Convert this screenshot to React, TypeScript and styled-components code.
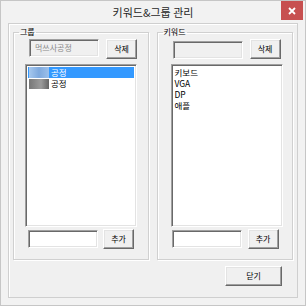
import React from "react";
import styled, { createGlobalStyle } from "styled-components";

const Global = createGlobalStyle`
  html, body { margin: 0; padding: 0; background: #ffffff; }
  * { box-sizing: border-box; }
`;

const FONT = `"Noto Sans CJK KR", "Noto Sans", sans-serif`;

const Window = styled.div`
  width: 306px;
  height: 306px;
  background: #f2f2f2;
  border: 1px solid #c6c6c6;
  display: flex;
  flex-direction: column;
  font-family: ${FONT};
  color: #000;
  overflow: hidden;
`;

const TitleBar = styled.div`
  height: 21px;
  display: flex;
  align-items: center;
  justify-content: center;
  position: relative;
  flex: none;
`;

const Title = styled.div`
  font-size: 11px;
  line-height: 13px;
  color: #1f1f1f;
  margin-top: 2px;
`;

const CloseBtn = styled.div`
  position: absolute;
  right: 2px;
  top: 0;
  width: 22px;
  height: 19px;
  background: #c75050;
  display: flex;
  align-items: center;
  justify-content: center;
`;

const Client = styled.div`
  flex: 1;
  margin: 1px 7px 7px 7px;
  background: #f0f0f0;
  border: 1px solid #cfcfcf;
  box-shadow: inset 1px 1px 0 #ffffff;
  padding: 3px 4px 0 4px;
  display: flex;
  flex-direction: column;
`;

const Groups = styled.div`
  display: flex;
  gap: 8px;
`;

const Group = styled.fieldset<{ $w: number }>`
  width: ${(p) => p.$w}px;
  height: 233px;
  margin: 0;
  padding: 0;
  border: 1px solid #d0d0d0;
  box-shadow: inset 1px 1px 0 #ffffff, 1px 1px 0 #ffffff;
  display: flex;
  flex-direction: column;
  min-width: 0;
`;

const Legend = styled.legend`
  font-size: 8px;
  line-height: 10px;
  padding: 0 1px;
  margin-left: 5px;
  color: #000;
`;

const Row = styled.div<{ $top: number; $gap: number; $left: number }>`
  display: flex;
  align-items: flex-start;
  margin-top: ${(p) => p.$top}px;
  margin-left: ${(p) => p.$left}px;
  gap: ${(p) => p.$gap}px;
`;

const TextBox = styled.div<{ $disabled?: boolean; $dy?: number }>`
  width: 70px;
  height: 18px;
  margin-top: ${(p) => p.$dy || 0}px;
  background: ${(p) => (p.$disabled ? "#f0f0f0" : "#ffffff")};
  border-top: 1px solid #a0a0a0;
  border-left: 1px solid #a0a0a0;
  border-right: 1px solid #ffffff;
  border-bottom: 1px solid #ffffff;
  box-shadow: inset 1px 1px 0 #696969, inset -1px -1px 0 #e3e3e3;
  font-size: 8px;
  line-height: 14px;
  padding: 1px 0 0 5px;
  color: #8a8a8a;
  white-space: nowrap;
  overflow: hidden;
`;

const Button = styled.div<{ $w: number }>`
  width: ${(p) => p.$w}px;
  height: 20px;
  background: #f0f0f0;
  border-top: 1px solid #ffffff;
  border-left: 1px solid #ffffff;
  border-right: 1px solid #696969;
  border-bottom: 1px solid #696969;
  box-shadow: inset -1px -1px 0 #a0a0a0, inset 1px 1px 0 #e3e3e3;
  font-size: 8px;
  line-height: 17px;
  text-align: center;
  color: #000;
`;

const ListBox = styled.div<{ $left: number }>`
  width: 112px;
  height: 163px;
  margin-top: 5px;
  margin-left: ${(p) => p.$left}px;
  background: #ffffff;
  border-top: 1px solid #a0a0a0;
  border-left: 1px solid #a0a0a0;
  border-right: 1px solid #ffffff;
  border-bottom: 1px solid #ffffff;
  box-shadow: inset 1px 1px 0 #696969, inset -1px -1px 0 #e3e3e3;
  padding: 2px 2px;
  display: flex;
  flex-direction: column;
`;

const Item = styled.div<{ $sel?: boolean }>`
  height: 11px;
  font-size: 8.5px;
  line-height: 11px;
  padding-left: 1px;
  white-space: nowrap;
  background: ${(p) => (p.$sel ? "#3399ff" : "transparent")};
  color: ${(p) => (p.$sel ? "#ffffff" : "#000000")};
  display: flex;
  align-items: center;
`;

const Blur = styled.span<{ $w: number; $sel?: boolean }>`
  display: inline-block;
  width: ${(p) => p.$w}px;
  height: ${(p) => (p.$sel ? 11 : 10)}px;
  background: ${(p) =>
    p.$sel
      ? "linear-gradient(90deg, #a6c8ee 0%, #7ea9de 50%, #9cc0ea 100%)"
      : "linear-gradient(90deg, #5f5f5f 0%, #8a8a8a 60%, #4a4a4a 100%)"};
  margin-right: 2px;
  opacity: ${(p) => (p.$sel ? 1 : 0.85)};
`;

const Footer = styled.div`
  display: flex;
  justify-content: flex-end;
  padding-right: 11px;
  margin-top: 6px;
`;

export default function App() {
  return (
    <>
      <Global />
      <Window>
        <TitleBar>
          <Title>키워드&amp;그룹 관리</Title>
          <CloseBtn>
            <svg width="8" height="8" viewBox="0 0 8 8">
              <path d="M1 1 L7 7 M7 1 L1 7" stroke="#fff" strokeWidth="1.8" />
            </svg>
          </CloseBtn>
        </TitleBar>
        <Client>
          <Groups>
            <Group $w={136}>
              <Legend>그룹</Legend>
              <Row $top={2} $gap={7} $left={15}>
                <TextBox $disabled $dy={0}>먹쓰사공정</TextBox>
                <Button $w={31}>삭제</Button>
              </Row>
              <ListBox $left={11}>
                <Item $sel>
                  <Blur $w={20} $sel />공정
                </Item>
                <Item>
                  <Blur $w={20} />공정
                </Item>
              </ListBox>
              <Row $top={2} $gap={5} $left={14}>
                <TextBox $dy={1} />
                <Button $w={31}>추가</Button>
              </Row>
            </Group>
            <Group $w={137}>
              <Legend>키워드</Legend>
              <Row $top={2} $gap={7} $left={15}>
                <TextBox $disabled $dy={2} />
                <Button $w={31}>삭제</Button>
              </Row>
              <ListBox $left={13}>
                <Item>키보드</Item>
                <Item>VGA</Item>
                <Item>DP</Item>
                <Item>애플</Item>
              </ListBox>
              <Row $top={2} $gap={6} $left={14}>
                <TextBox $dy={1} />
                <Button $w={31}>추가</Button>
              </Row>
            </Group>
          </Groups>
          <Footer>
            <Button $w={57}>닫기</Button>
          </Footer>
        </Client>
      </Window>
    </>
  );
}
